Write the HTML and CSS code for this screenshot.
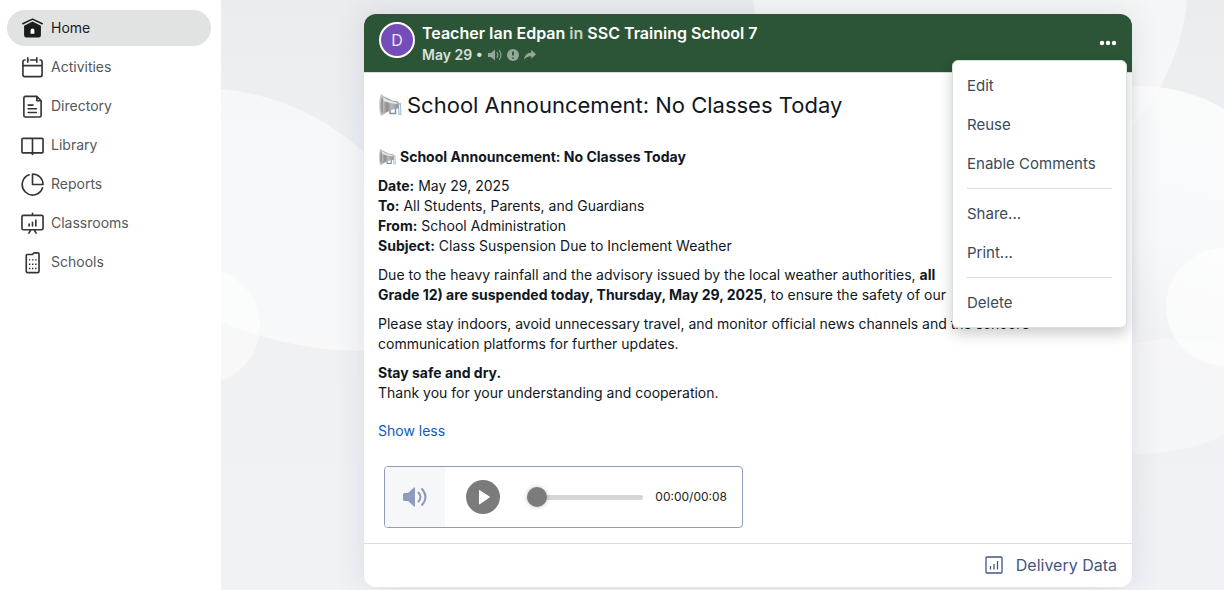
FILE: index.html
```html
<!DOCTYPE html>
<html lang="en">
<head>
<meta charset="utf-8">
<meta name="viewport" content="width=device-width, initial-scale=1">
<title>Home</title>
<link rel="stylesheet" href="styles.css">
</head>
<body>
<svg class="defs" aria-hidden="true">
  <defs>
    <linearGradient id="horn" x1="0" y1="0" x2="1" y2="0">
      <stop offset="0" stop-color="#d0d0d0"/>
      <stop offset=".35" stop-color="#8e8e8e"/>
      <stop offset=".6" stop-color="#b9b9b9"/>
      <stop offset="1" stop-color="#8c9196"/>
    </linearGradient>
  </defs>
  <symbol id="megaphone" viewBox="0 0 24 24">
    <path d="M15 10.500l7.500-.5.5 12h-3l-.5-8h-4.500z" fill="#a5bfd1"/>
    <path d="M20.800 11.500l.7 9.500" stroke="#e9f2f8" stroke-width="1"/>
    <path d="M11.500 15.500v5h5.500v-5" fill="none" stroke="#87929a" stroke-width="1.500"/>
    <path d="M2.500 1.200Q9 6.500 20 8.700V15.500Q10 16.500 3 23z" fill="url(#horn)"/>
    <path d="M4.500 4Q10 8 19 9.800V11.200Q11 10.500 5 8z" fill="#e6e6e6"/>
    <ellipse cx="3" cy="12" rx="2.200" ry="11" fill="#c6c6c6"/>
    <ellipse cx="3.500" cy="12.500" rx="1.300" ry="8.500" fill="#989898"/>
  </symbol>
</svg>
<div class="app">
  <nav class="sidebar" aria-label="Main">
    <a class="nav-link active" href="#home">
      <svg viewBox="0 0 24 24"><path d="M1.800 7 12 2.200l10.200 4.800" fill="none" stroke="#1b1c1d" stroke-width="1.600" stroke-linecap="round" stroke-linejoin="round"/><path d="M12 4.800 20.800 9V19a2.500 2.500 0 0 1-2.500 2.500H5.700A2.500 2.500 0 0 1 3.200 19V9z" fill="#1b1c1d"/><path d="M10 17.500v-3.500a2 2 0 0 1 4 0v3.500z" fill="#fff"/></svg>
      Home
    </a>
    <a class="nav-link" href="#activities">
      <svg class="line" viewBox="0 0 24 24"><path d="M4.200 4.200H4a2 2 0 0 0-2 2V19.500a2 2 0 0 0 2 2h16a2 2 0 0 0 2-2V6.200a2 2 0 0 0-2-2h-.2M2 10h20M10 4.200h4.500M7 1.800v4.700M16.500 1.800v4.700M7 4.200h.8M15.500 4.200h1"/></svg>
      Activities
    </a>
    <a class="nav-link" href="#directory">
      <svg class="line" viewBox="0 0 24 24"><path d="M16.500 1.500H4.500a1.500 1.500 0 0 0-1.500 1.500v18.500a1.500 1.500 0 0 0 1.500 1.500h15a1.500 1.500 0 0 0 1.500-1.500V6zM16.500 1.500v4.500H21M7.500 10.500h5M7.500 14.300h8.500M7.500 18.200h8.500"/></svg>
      Directory
    </a>
    <a class="nav-link" href="#library">
      <svg class="line" viewBox="0 0 24 24"><path d="M12 4.500H2a1 1 0 0 0-1 1v13.200a1 1 0 0 0 1 1h9l1 1.500 1-1.500h9a1 1 0 0 0 1-1V5.500a1 1 0 0 0-1-1zM12 4.500V20"/></svg>
      Library
    </a>
    <a class="nav-link" href="#reports">
      <svg class="line" viewBox="0 0 24 24"><path d="M8.500 1.800A10.900 10.900 0 1 0 22.500 15.500M12 1V12h11A11 11 0 0 0 12 1z"/></svg>
      Reports
    </a>
    <a class="nav-link" href="#classrooms">
      <svg class="line" viewBox="0 0 24 24"><path d="M2.500 3.500h19A1.500 1.500 0 0 1 23 5v12a1.500 1.500 0 0 1-1.500 1.500h-19A1.500 1.500 0 0 1 1 17V5a1.500 1.500 0 0 1 1.500-1.500zM12 1.500v2M10 19l-1.800 3M14 19l1.800 3M8.500 12.500v2M12 10.800v3.700M15.500 8.500v6"/></svg>
      Classrooms
    </a>
    <a class="nav-link" href="#schools">
      <svg class="line" viewBox="0 0 24 24"><path d="M12 3.700 13.500 2h4.300a1 1 0 0 1 1 1v18a1.500 1.500 0 0 1-1.500 1.500H7A1.500 1.500 0 0 1 5.500 21V4.700a1 1 0 0 1 1-1z"/><path d="M9 8.500v11M12.200 8.500v11M15.500 8.500v11" stroke-width="1.500" stroke-dasharray="1.500 3" stroke-linecap="butt"/></svg>
      Schools
    </a>
  </nav>

  <main class="feed">
    <svg class="backdrop" viewBox="0 0 1003 590" preserveAspectRatio="none" aria-hidden="true">
      <defs>
        <linearGradient id="fade" x1=".6" y1="0" x2=".3" y2="1">
          <stop offset="0" stop-color="#fff" stop-opacity=".75"/>
          <stop offset=".45" stop-color="#fff" stop-opacity=".55"/>
          <stop offset=".8" stop-color="#fff" stop-opacity="0"/>
        </linearGradient>
      </defs>
      <g fill="#fff">
        <path d="M0 89Q80 96 143 152L200 220V351H143Q70 351 0 322z" fill-opacity=".5"/>
        <circle cx="-19" cy="326" r="58" fill-opacity=".5"/>
        <circle cx="749" cy="-20" r="218" fill-opacity=".5"/>
        <circle cx="919" cy="251" r="165" fill="url(#fade)"/>
        <path d="M860 360Q930 330 1003 342V435Q960 458 860 456z" fill-opacity=".35"/>
        <circle cx="1004" cy="307" r="59" fill-opacity=".6"/>
      </g>
    </svg>
    <article class="post">
      <header class="post-header">
        <span class="avatar">D</span>
        <div class="byline">
          <div class="author">Teacher Ian Edpan <span class="dim">in</span> SSC Training School 7</div>
          <div class="meta">
            <span>May 29 •</span>
            <svg class="sound" viewBox="0 0 14 12"><path d="M0 4h3l4-3.500v11L3 8H0z" fill="currentColor"/><path d="M9 3.500q1.500 2.500 0 5M11.500 1.500q2.800 4.500 0 9" fill="none" stroke="currentColor" stroke-width="1.100" stroke-linecap="round"/></svg>
            <svg viewBox="0 0 12 12"><circle cx="6" cy="6" r="6" fill="currentColor"/><path d="M6 2.500v4M6 8.500v1.300" stroke="#2b5536" stroke-width="1.800"/></svg>
            <svg viewBox="0 0 12 12"><path d="M7.300.8 12 5.300 7.300 9.800V7.300Q2.500 7 .2 11 .2 4 7.300 3.500z" fill="currentColor"/></svg>
          </div>
        </div>
        <div class="actions">
          <button class="more" type="button" aria-label="More" aria-haspopup="menu" aria-expanded="true">
            <svg viewBox="0 0 18 6"><circle cx="3" cy="3" r="2.200"/><circle cx="9" cy="3" r="2.200"/><circle cx="15" cy="3" r="2.200"/></svg>
          </button>
          <div class="menu" role="menu">
            <button type="button" role="menuitem">Edit</button>
            <button type="button" role="menuitem">Reuse</button>
            <button type="button" role="menuitem">Enable Comments</button>
            <hr>
            <button type="button" role="menuitem">Share...</button>
            <button type="button" role="menuitem">Print...</button>
            <hr>
            <button type="button" role="menuitem">Delete</button>
          </div>
        </div>
      </header>

      <div class="post-body">
        <h1><svg class="emoji" aria-hidden="true"><use href="#megaphone"/></svg>School Announcement: No Classes Today</h1>
        <div class="message">
          <p><b><svg class="emoji" aria-hidden="true"><use href="#megaphone"/></svg>School Announcement: No Classes Today</b></p>
          <p><b>Date:</b> May 29, 2025<br><b>To:</b> All Students, Parents, and Guardians<br><b>From:</b> School Administration<br><b>Subject:</b> Class Suspension Due to Inclement Weather</p>
          <p>Due to the heavy rainfall and the advisory issued by the local weather authorities, <b>all<br>Grade 12) are suspended today, Thursday, May 29, 2025</b>, to ensure the safety of our</p>
          <p>Please stay indoors, avoid unnecessary travel, and monitor official news channels and the school’s<br>communication platforms for further updates.</p>
          <p><b>Stay safe and dry.</b><br>Thank you for your understanding and cooperation.</p>
        </div>
        <a class="toggle" href="#less">Show less</a>
        <div class="player">
          <button class="volume" type="button" aria-label="Volume">
            <svg viewBox="0 0 24 20"><path d="M1.500 6H5l6-5.500q1-.5 1 .5v18q0 1-1 .5L5 14H1.500Q0 14 0 12.500v-5Q0 6 1.500 6z" fill="currentColor"/><path d="M15.500 5.500q4 4.500 0 9M19 2q7 8 0 16" fill="none" stroke="currentColor" stroke-width="2" stroke-linecap="round"/></svg>
          </button>
          <button class="play" type="button" aria-label="Play">
            <svg viewBox="0 0 34 34"><circle cx="17" cy="17" r="17" fill="#7b7b7b"/><path d="M13.500 10.500 23.500 17l-10 7z" fill="#fff" stroke="#fff" stroke-linejoin="round"/></svg>
          </button>
          <input class="seek" type="range" min="0" max="8" value="0" aria-label="Seek">
          <span class="time">00:00/00:08</span>
        </div>
      </div>

      <footer class="post-footer">
        <a class="delivery" href="#delivery">
          <svg viewBox="0 0 18 18" fill="none" stroke="currentColor"><rect x="1" y="1" width="16" height="16" rx="1" stroke-width="1.300"/><path d="M5.500 10v3.500M9 8v5.500M12.500 5v8.500" stroke-width="1.300"/></svg>
          Delivery Data
        </a>
      </footer>
    </article>
  </main>
</div>
</body>
</html>
```
FILE: styles.css
```css
* {
  box-sizing: border-box;
}

body {
  margin: 0;
  font-family: Inter, "Liberation Sans", sans-serif;
  font-size: 14px;
  line-height: 20px;
  color: #101724;
}

button {
  margin: 0;
  padding: 0;
  border: 0;
  background: none;
  font: inherit;
  color: inherit;
  cursor: pointer;
}

a {
  text-decoration: none;
}

svg {
  display: block;
  flex: none;
}

.defs {
  position: absolute;
  width: 0;
  height: 0;
}

.app {
  display: flex;
  min-height: 100vh;
}

.sidebar {
  display: flex;
  flex: 0 0 221px;
  flex-direction: column;
  gap: 3px;
  padding: 10px 10px 10px 7px;
  background: #fff;
}

.nav-link {
  display: flex;
  align-items: center;
  gap: 7px;
  height: 36px;
  padding: 0 14px;
  border-radius: 18px;
  color: #55585a;
}

.nav-link svg {
  width: 23px;
  height: 23px;
}

.nav-link.active {
  background: #e1e3e2;
  color: #1a2029;
}

.line {
  fill: none;
  stroke: #323435;
  stroke-width: 1.7;
  stroke-linecap: round;
  stroke-linejoin: round;
}

.feed {
  position: relative;
  flex: 1;
  min-width: 0;
  padding: 14px 92px 3px 143px;
  background: linear-gradient(#ebecee, #edf1f3 30%, #f0f1f3 60%, #f0f2f6);
}

.backdrop {
  position: absolute;
  inset: 0;
  width: 100%;
  height: 100%;
}

.post {
  position: relative;
  border-radius: 12px;
  background: #fff;
  box-shadow: 0 0 32px rgba(50, 60, 90, 0.12);
}

.post-header {
  display: flex;
  align-items: flex-start;
  gap: 7px;
  padding: 8px 15px 7px;
  border-bottom: 1px solid #d5e0d9;
  border-radius: 12px 12px 0 0;
  background: #2b5536;
  background-clip: padding-box;
  color: #fff;
}

.avatar {
  display: grid;
  place-items: center;
  width: 36px;
  height: 36px;
  border: 2px solid #fff;
  border-radius: 50%;
  background: #744db8;
  color: #eee6fa;
  font-size: 16px;
}

.byline {
  flex: 1;
  display: grid;
  gap: 1px;
}

.author {
  font-size: 16px;
  line-height: 22px;
  font-weight: 600;
}

.dim {
  color: #c6d3ca;
}

.meta {
  display: flex;
  align-items: center;
  gap: 5px;
  font-weight: 600;
  color: #d7e1da;
}

.meta svg {
  width: 12px;
  height: 12px;
  color: #93a899;
}

.meta .sound {
  width: 14px;
}

.actions {
  position: relative;
}

.more {
  display: grid;
  place-items: center;
  width: 18px;
  height: 42px;
}

.more svg {
  width: 18px;
  fill: #fff;
}

.menu {
  position: absolute;
  top: 38px;
  right: -10px;
  z-index: 2;
  width: 175px;
  padding: 5px 14px;
  border: 1px solid #d8e0df;
  border-radius: 6px;
  background: #fff;
  box-shadow: 0 6px 14px rgba(0, 0, 0, 0.2);
  font-size: 15px;
  color: #394b59;
}

.menu button {
  display: block;
  width: 100%;
  height: 39px;
  text-align: left;
}

.menu hr {
  height: 1px;
  margin: 5px 0;
  border: 0;
  background: #d8dfdf;
}

.post-body {
  padding: 17px 14px 15px;
}

h1 {
  display: flex;
  align-items: center;
  gap: 4px;
  margin: 0 0 27px;
  font-size: 22px;
  line-height: 30px;
  font-weight: 400;
}

.emoji {
  width: 25px;
  height: 24px;
}

.message {
  display: grid;
  gap: 9px;
  margin-bottom: 18px;
}

.message p {
  margin: 0;
}

.message .emoji {
  display: inline-block;
  width: 19px;
  height: 18px;
  margin-right: 3px;
  vertical-align: -4px;
}

.toggle {
  color: #0b5cc4;
}

.player {
  display: flex;
  align-items: center;
  width: 359px;
  max-width: 100%;
  height: 62px;
  margin: 25px 0 0 6px;
  border: 1px solid #8e9bbb;
  border-radius: 4px;
}

.volume {
  display: grid;
  place-items: center;
  width: 60px;
  height: 100%;
  border-radius: 3px 0 0 3px;
  background: #f5f7f9;
  color: #8e9bbb;
}

.volume svg {
  width: 24px;
  height: 20px;
}

.play {
  margin: 0 27px 0 21px;
}

.play svg {
  width: 34px;
  height: 34px;
}

.seek {
  flex: 1;
  min-width: 0;
  height: 20px;
  margin: 0 12px 0 0;
  appearance: none;
  background: none;
}

.seek::-webkit-slider-runnable-track {
  height: 5px;
  border-radius: 2px;
  background: #d6d6d6;
}

.seek::-webkit-slider-thumb {
  width: 20px;
  height: 20px;
  margin-top: -8px;
  appearance: none;
  border-radius: 50%;
  background: #7b7b7b;
  box-shadow: 0 0 4px rgba(0, 0, 0, 0.25);
}

.time {
  margin-right: 15px;
  font-size: 12px;
  color: #222;
}

.post-footer {
  display: flex;
  justify-content: flex-end;
  padding: 10px 15px 11px;
  border-top: 1px solid #d9dddf;
}

.delivery {
  display: flex;
  align-items: center;
  gap: 13px;
  font-size: 16px;
  line-height: 22px;
  color: #43557f;
}

.delivery svg {
  width: 18px;
  height: 18px;
}
```
